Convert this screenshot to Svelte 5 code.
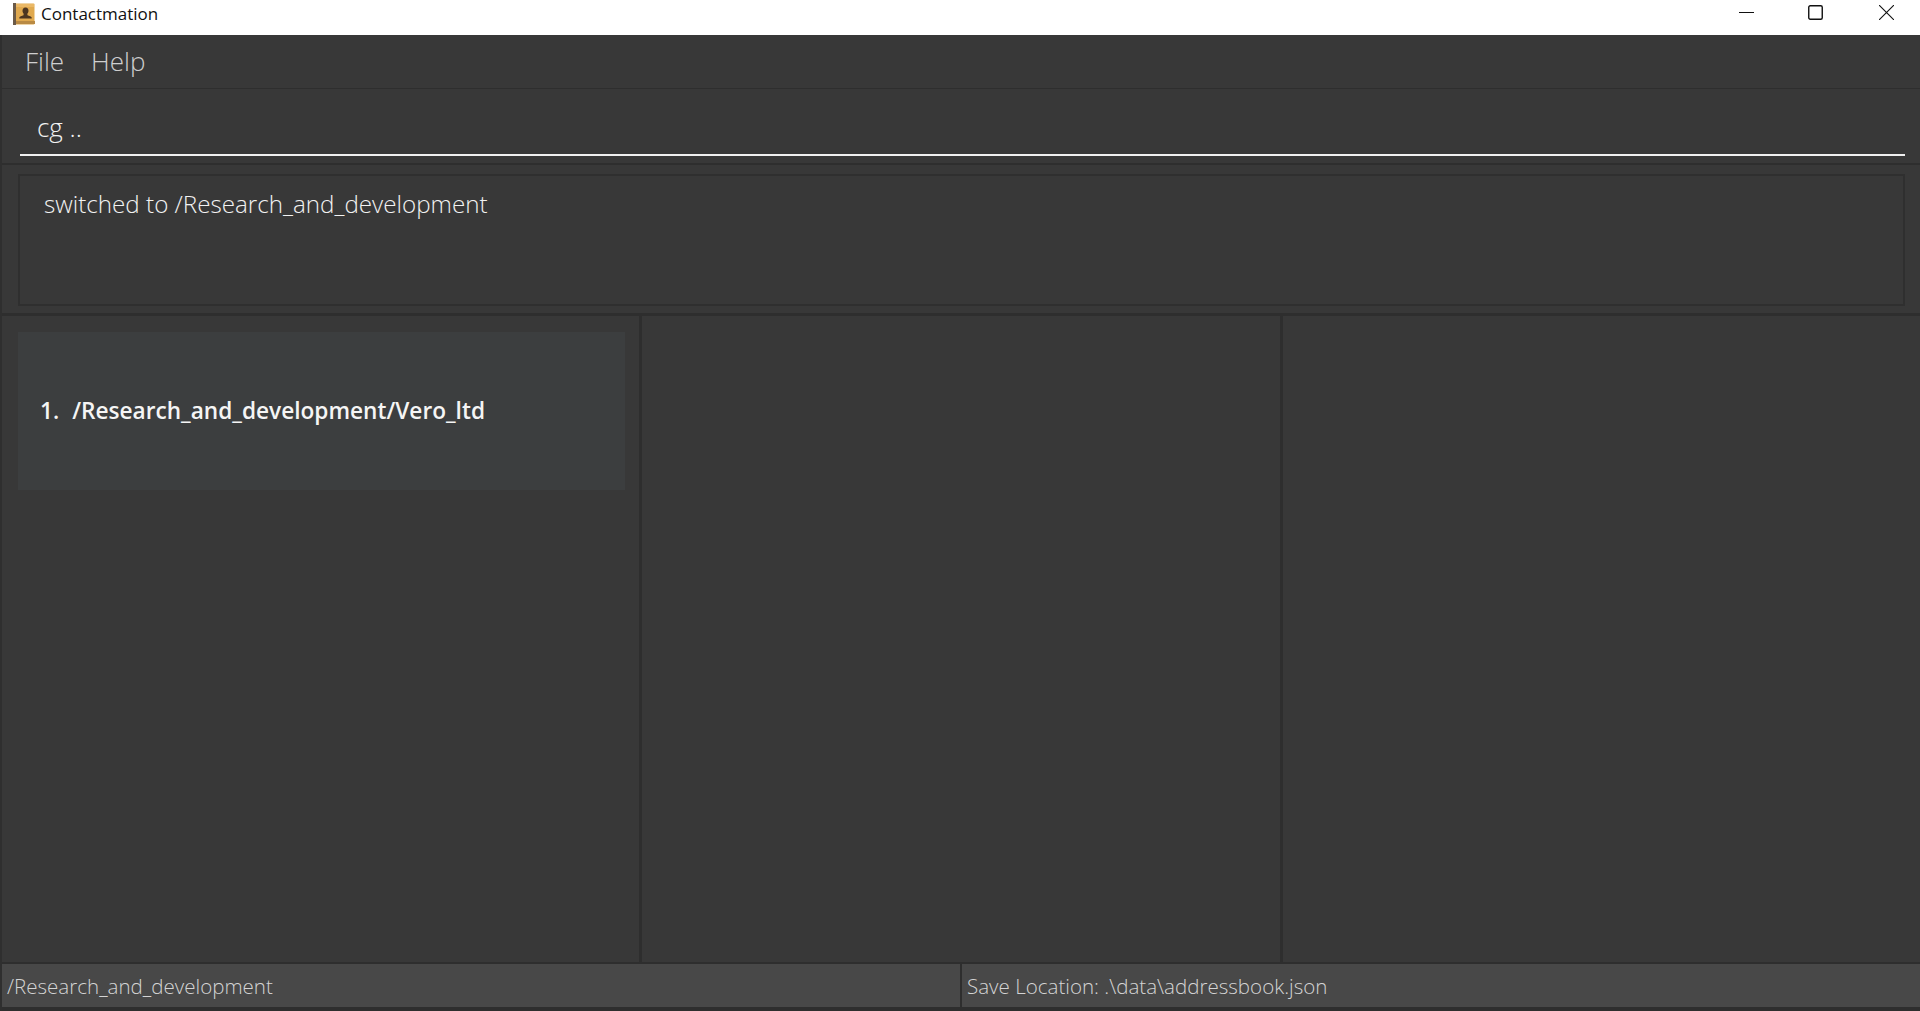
<script>
  const columns = [0, 1, 2];
</script>

<div class="window">
  <header class="titlebar">
    <div class="title-left">
      <svg class="app-icon" viewBox="0 0 22 22" width="22" height="22" aria-hidden="true">
        <rect x="0.5" y="0.5" width="21" height="21" rx="1" fill="#e0a94f" />
        <rect x="0" y="0" width="3" height="22" fill="#6b5a48" />
        <rect x="3" y="18" width="19" height="3" fill="#b98a44" />
        <rect x="3" y="1" width="18" height="3" fill="#eab866" />
        <path d="M12.5 4.5c-2 0-3 1.500-3 3.300 0 1.400.6 2.400 1.200 3l-.2 1.400c-1.800.7-3.700 1.200-4.200 2.300v1h12.400v-1c-.5-1.100-2.400-1.600-4.200-2.300l-.2-1.400c.6-.6 1.200-1.600 1.200-3 0-1.800-1-3.300-3-3.300z" fill="#4c3520" />
      </svg>
      <span class="title">Contactmation</span>
    </div>
    <div class="controls">
      <svg class="ctl min" viewBox="0 0 15 15" width="15" height="15" aria-hidden="true"><path d="M0 7.500h15" stroke="#111" fill="none" /></svg>
      <svg class="ctl max" viewBox="0 0 15 15" width="15" height="15" aria-hidden="true"><rect x="0.750" y="0.750" width="13.500" height="13.500" rx="1.500" stroke="#111" stroke-width="1.400" fill="none" /></svg>
      <svg class="ctl close" viewBox="0 0 15 15" width="15" height="15" aria-hidden="true"><path d="M0 0L15 15M15 0L0 15" stroke="#111" stroke-width="1.100" fill="none" /></svg>
    </div>
  </header>

  <main class="app">
    <nav class="menubar">
      <span class="menu-item">File</span>
      <span class="menu-item">Help</span>
    </nav>

    <section class="command">
      <div class="command-input">cg ..</div>
    </section>

    <section class="result">
      <div class="result-box">switched to /Research_and_development</div>
    </section>

    <section class="lists">
      {#each columns as c}
        <div class="col">
          {#if c === 0}
            <div class="card"><span class="idx">1.</span><span>/Research_and_development/Vero_ltd</span></div>
          {/if}
        </div>
      {/each}
    </section>

    <footer class="status">
      <div class="status-a">/Research_and_development</div>
      <div class="status-b">Save Location: .\data\addressbook.json</div>
    </footer>
  </main>
</div>

<style>
  :global(body) { margin: 0; background: #fff; }
  .window {
    width: 1920px;
    height: 1011px;
    display: flex;
    flex-direction: column;
    overflow: hidden;
    font-family: "Open Sans", "Noto Sans", sans-serif;
    font-weight: 300;
  }
  .titlebar {
    height: 35px;
    flex: none;
    background: #fff;
    display: flex;
    justify-content: space-between;
    align-items: center;
    box-sizing: border-box;
    padding: 0 0 8px 13px;
  }
  .title-left { display: flex; align-items: center; gap: 6px; }
  .app-icon { display: block; margin-top: 1px; }
  .title {
    font-size: 17px;
    font-weight: 400;
    font-family: "Open Sans", sans-serif;
    color: #111;
  }
  .controls { display: flex; align-items: center; margin-bottom: 2px; }
  .ctl { display: block; }
  .min { margin-right: 54px; }
  .max { margin-right: 56px; }
  .close { margin-right: 26px; }

  .app {
    flex: 1;
    display: flex;
    flex-direction: column;
    background: #383838;
    border-left: 2px solid #2f2f2f;
    min-height: 0;
  }
  .menubar {
    height: 54px;
    flex: none;
    box-sizing: border-box;
    border-bottom: 1px solid #2e2e2e;
    display: flex;
    align-items: center;
    padding: 0 0 2px 23px;
    gap: 27px;
    font-size: 26px;
    color: #cfcfcf;
  }
  .command {
    height: 76px;
    flex: none;
    box-sizing: border-box;
    border-bottom: 2px solid #2e2e2e;
    padding: 0 15px 7px 18px;
    display: flex;
    align-items: flex-end;
  }
  .command-input {
    flex: 1;
    height: 54px;
    box-sizing: border-box;
    border-bottom: 2px solid #f0f0f0;
    padding: 0 0 0 17px;
    font-size: 26px;
    line-height: 50px;
    color: #f2f2f2;
  }
  .result {
    height: 151px;
    flex: none;
    box-sizing: border-box;
    border-bottom: 3px solid #2e2e2e;
    padding: 9px 15px 7px 16px;
    display: flex;
  }
  .result-box {
    flex: 1;
    box-sizing: border-box;
    border: 2px solid #2f2f2f;
    padding: 11px 0 0 24px;
    font-size: 24.2px;
    line-height: 34px;
    color: #f2f2f2;
  }
  .lists {
    flex: 1;
    min-height: 0;
    display: flex;
  }
  .col {
    flex: 1;
    box-sizing: border-box;
    border-right: 3px solid #2e2e2e;
    padding: 16px 14px 0 16px;
  }
  .col:last-child { border-right: 0; }
  .card {
    height: 158px;
    background: #3c3e3f;
    display: flex;
    align-items: center;
    gap: 13px;
    padding-left: 22px;
    padding-bottom: 1px;
    box-sizing: border-box;
    font-size: 22.65px;
    font-weight: 600;
    color: #f5f5f5;
  }
  .status {
    height: 49px;
    flex: none;
    display: flex;
    box-sizing: border-box;
    background: #484848;
    border-top: 2px solid #2e2e2e;
    border-bottom: 4px solid #2e2e2e;
    font-size: 20.55px;
    line-height: 44px;
    color: #d4d4d4;
  }
  .status-a {
    width: 960px;
    flex: none;
    box-sizing: border-box;
    border-right: 2px solid #2e2e2e;
    padding-left: 5px;
  }
  .status-b { flex: 1; padding-left: 5px; }
</style>
